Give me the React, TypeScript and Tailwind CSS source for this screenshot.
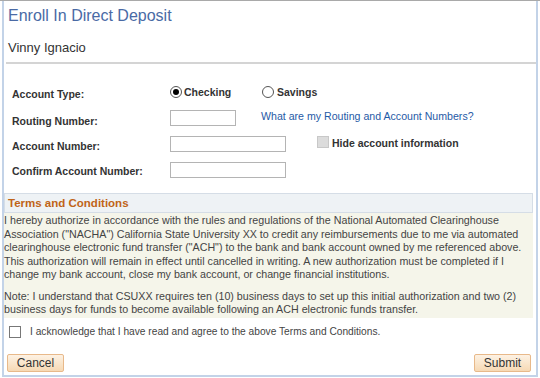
const labelCls = "text-[10.5px] leading-[13px] font-bold text-[#333]";

const Radio = ({ checked }: { checked?: boolean }) => (
  <span className="inline-flex h-[12px] w-[12px] items-center justify-center rounded-full border border-[#555] bg-white">
    {checked && <span className="h-[6px] w-[6px] rounded-full bg-black" />}
  </span>
);

const TextBox = ({ w }: { w: string }) => (
  <input type="text" className={`h-[16px] border border-[#b4b4b4] bg-white ${w}`} />
);

const Btn = ({ text }: { text: string }) => (
  <button className="h-[18px] w-[57px] rounded-[2px] border border-[#e8b98a] bg-gradient-to-b from-[#fdf2e4] to-[#f6d9b4] text-[12px] leading-[14px] text-[#333]">
    {text}
  </button>
);

export default function App() {
  return (
    <div className="h-[378px] w-[540px] overflow-hidden bg-white font-['Liberation_Sans',Arial,sans-serif] border-t border-[#a9a9a9]">
      <div className="mx-[2px] flex h-[376px] flex-col border-x-2 border-b-2 border-[#c3d3e8]">
        <h1 className="pl-[4px] pt-[5px] text-[16px] leading-[19px] text-[#4a6aa5]">Enroll In Direct Deposit</h1>
        <div className="pl-[4px] pt-[15px] text-[13px] leading-[15px] text-[#333]">Vinny Ignacio</div>
        <div className="ml-[2px] mt-[7px] h-[2px] bg-[#d4d4d4]" />

        <div className="mt-[20px] flex h-[16px] items-center">
          <div className={`${labelCls} w-[166px] pl-[8px] pt-[4px]`}>Account Type:</div>
          <label className="flex w-[92px] items-center gap-[2px]">
            <Radio checked />
            <span className={labelCls}>Checking</span>
          </label>
          <label className="flex items-center gap-[3px]">
            <Radio />
            <span className={labelCls}>Savings</span>
          </label>
        </div>

        <div className="mt-[9px] flex h-[18px] items-center">
          <div className={`${labelCls} w-[166px] pl-[8px] pt-[7px]`}>Routing Number:</div>
          <TextBox w="w-[66px]" />
          <a className="ml-[25px] pb-[4px] text-[10.6px] leading-[13px] text-[#1f5aa6]">What are my Routing and Account Numbers?</a>
        </div>

        <div className="mt-[8px] flex h-[18px] items-center">
          <div className={`${labelCls} w-[166px] pl-[8px] pt-[4px]`}>Account Number:</div>
          <TextBox w="w-[116px]" />
          <span className="mb-[4px] ml-[31px] h-[12px] w-[12px] border border-[#c8c8c8] bg-[#dcdcdc]" />
          <span className={`${labelCls} ml-[3px] pb-[1px]`}>Hide account information</span>
        </div>

        <div className="mt-[8px] flex h-[18px] items-center">
          <div className={`${labelCls} w-[166px] pl-[8px] pt-[2px]`}>Confirm Account Number:</div>
          <TextBox w="w-[116px]" />
        </div>

        <div className="mr-[3px] mt-[14px] border border-[#d5dde6] bg-[#eef2f5] px-[3px] py-[2px] text-[11.5px] font-bold leading-[14px] text-[#c06418]">
          Terms and Conditions
        </div>
        <div className="mr-[3px] whitespace-nowrap bg-[#f5f5ea] pb-[1px] pt-[1px] text-[10.7px] leading-[13.5px] text-[#444]">
          <p>
            I hereby authorize in accordance with the rules and regulations of the National Automated Clearinghouse
            <br />
            Association ("NACHA") California State University XX to credit any reimbursements due to me via automated
            <br />
            clearinghouse electronic fund transfer ("ACH") to the bank and bank account owned by me referenced above.
            <br />
            This authorization will remain in effect until cancelled in writing. A new authorization must be completed if I
            <br />
            change my bank account, close my bank account, or change financial institutions.
          </p>
          <p className="mt-[8px]">
            Note: I understand that CSUXX requires ten (10) business days to set up this initial authorization and two (2)
            <br />
            business days for funds to become available following an ACH electronic funds transfer.
          </p>
        </div>

        <div className="mt-[7px] flex h-[14px] items-center pl-[5px]">
          <span className="h-[12px] w-[12px] border border-[#777] bg-white" />
          <span className="ml-[9px] text-[10.2px] leading-[13px] text-[#444]">I acknowledge that I have read and agree to the above Terms and Conditions.</span>
        </div>

        <div className="mt-[15px] flex justify-between pl-[3px] pr-[5px]">
          <Btn text="Cancel" />
          <Btn text="Submit" />
        </div>
      </div>
    </div>
  );
}
